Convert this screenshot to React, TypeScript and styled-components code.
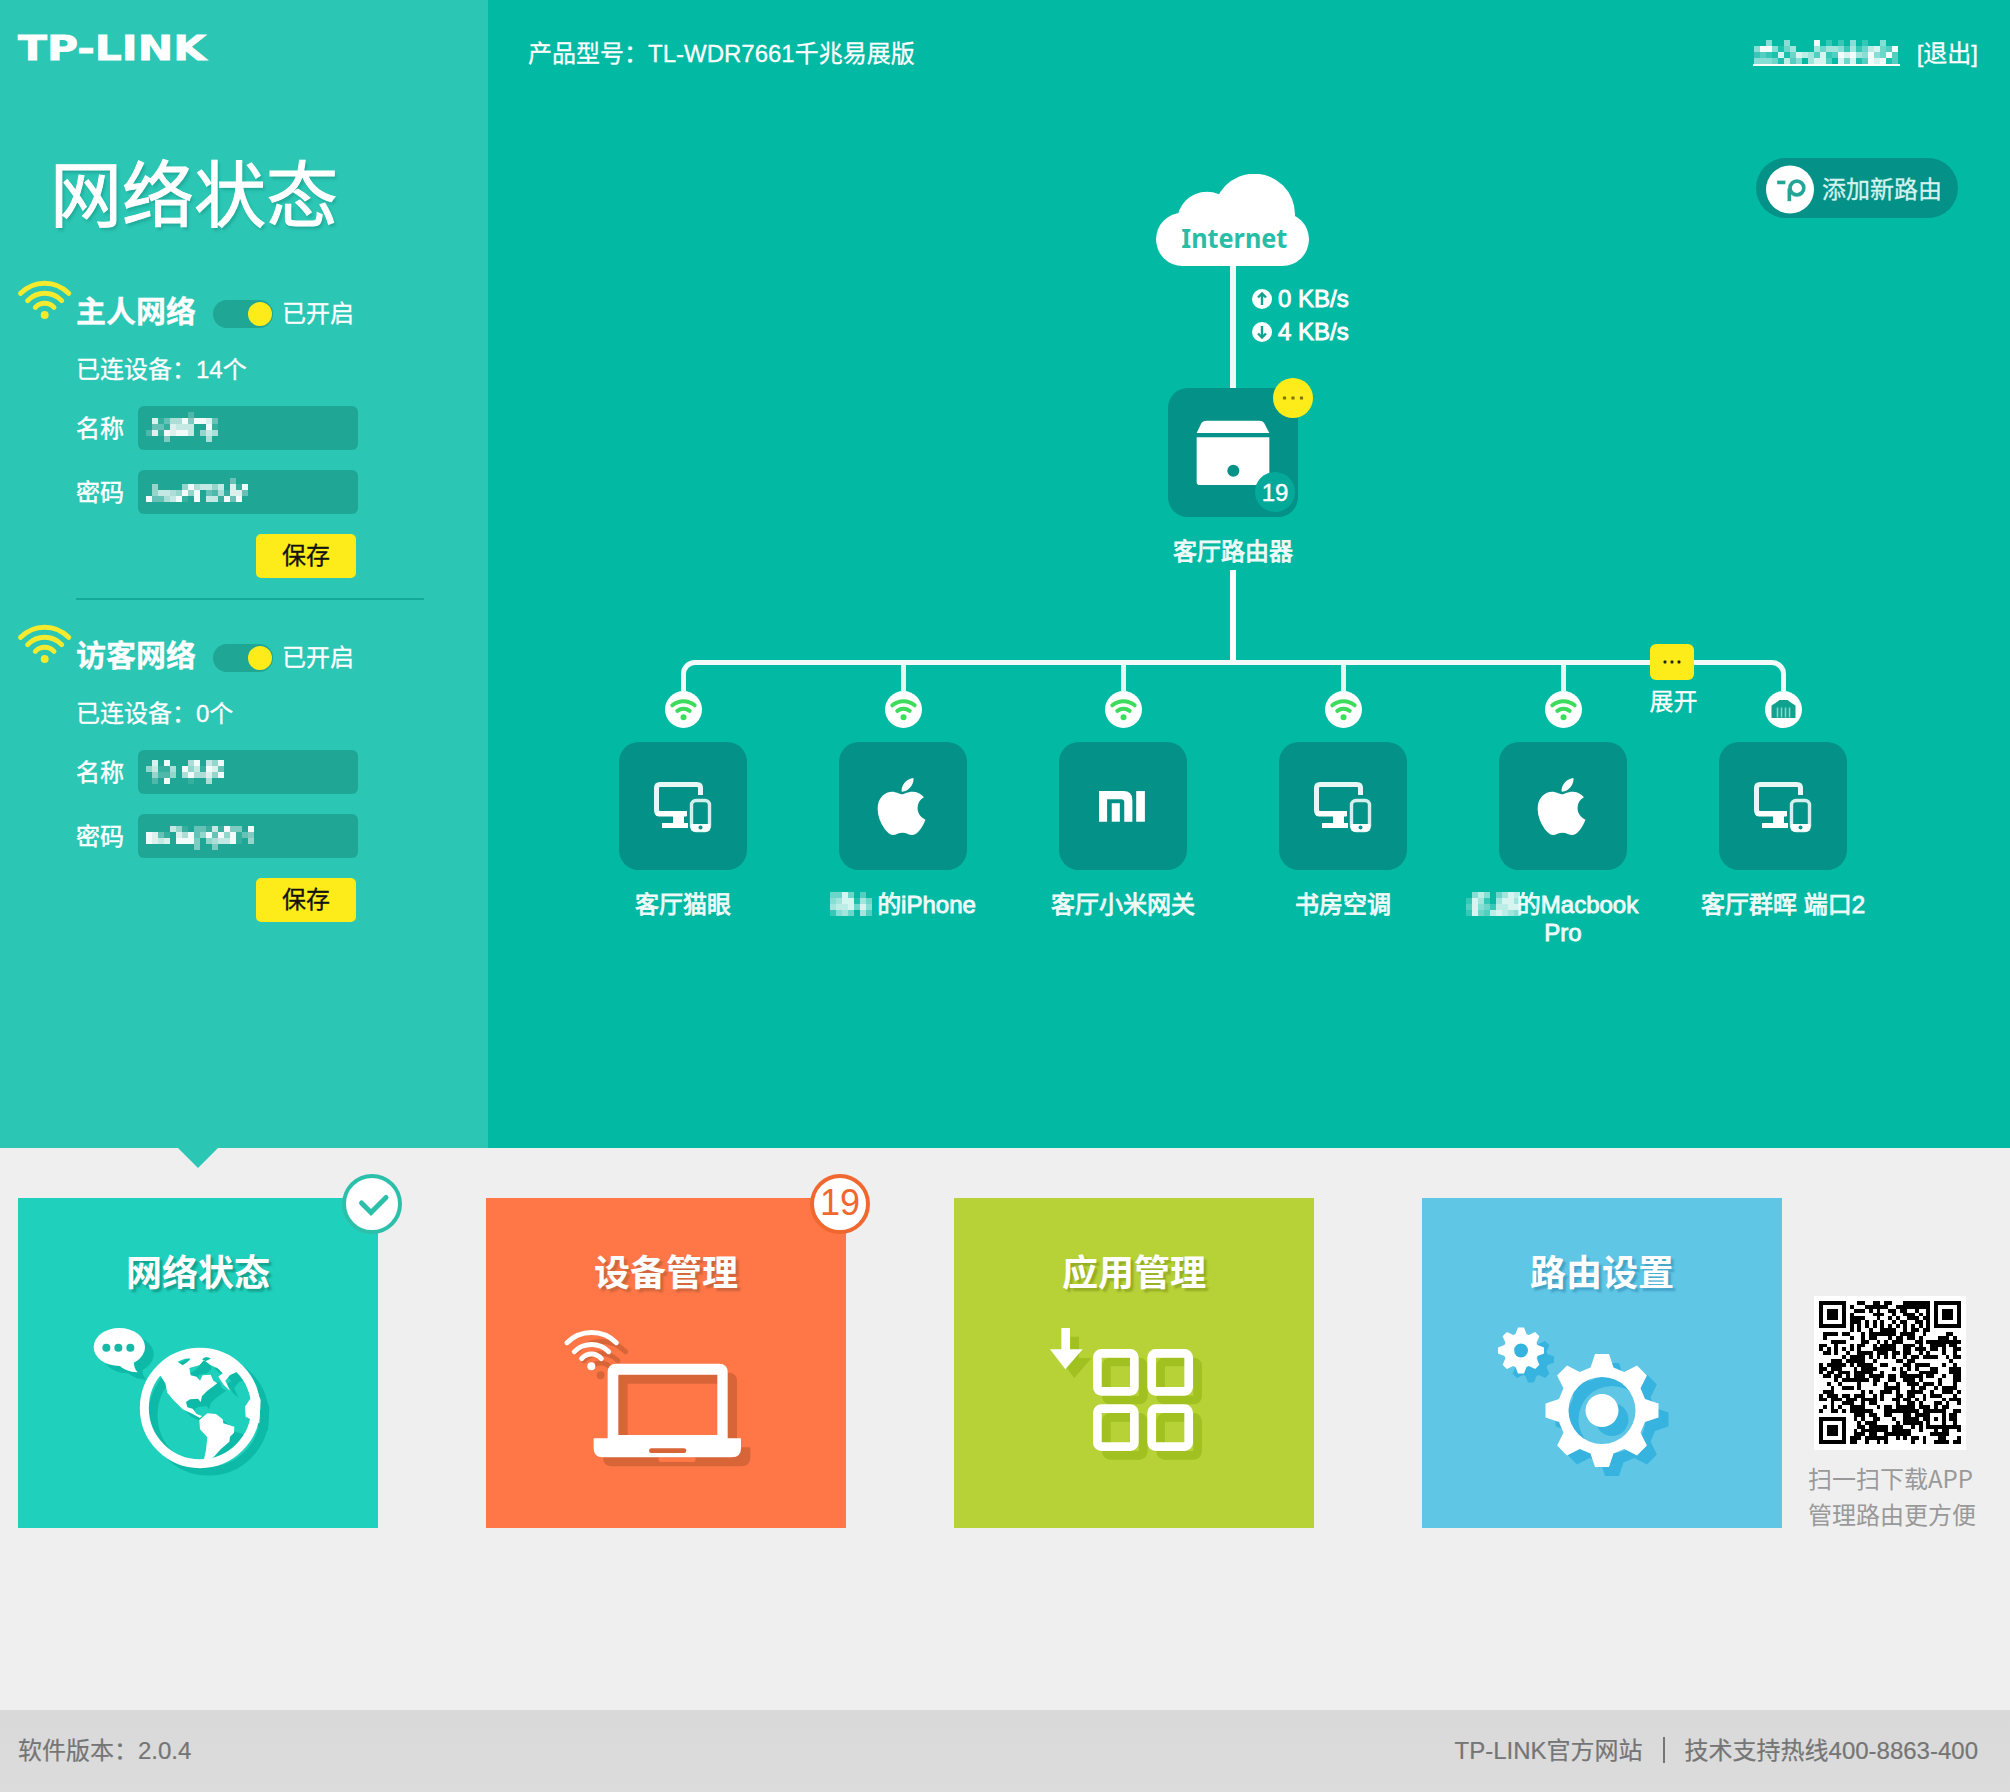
import React from "react";
import styled, { createGlobalStyle } from "styled-components";
import { FaApple } from "react-icons/fa";

const colors = {
  main: "#02b9a4",
  side: "#2bc6b4",
  dark: "#049187",
  field: "#1fa694",
  yellow: "#fdeb1a",
  page: "#efefef",
};

const sans = `"Liberation Sans", "Noto Sans CJK SC", sans-serif`;

const GlobalStyle = createGlobalStyle`
  * { box-sizing: border-box; }
  body { margin: 0; background: ${colors.page}; font-family: ${sans}; font-size: 24px; }
  button, input { font: inherit; }
  svg { display: block; }
`;

const Page = styled.div`
  width: 2010px;
  height: 1792px;
  display: flex;
  flex-direction: column;
  overflow: hidden;
`;

const Top = styled.div`
  display: flex;
  height: 1148px;
  color: #fff;
  -webkit-text-stroke: 0.3px currentColor;
`;

const Sidebar = styled.aside`
  width: 488px;
  background: ${colors.side};
  padding: 30px 0 0 18px;
`;

const Title = styled.h1`
  margin: 80px 0 0 32px;
  font-size: 72px;
  line-height: 100px;
  height: 100px;
  font-weight: 400;
  -webkit-text-stroke: 1px #fff;
  text-shadow: 2px 3px 3px rgba(0, 90, 80, 0.25);
`;

const Network = styled.section<{ $gap: number }>`
  margin-top: ${(p) => p.$gap}px;
  display: flex;
  gap: 4px;
`;

const NetworkBody = styled.div`
  width: 348px;
  padding-top: 12px;
`;

const NetworkHead = styled.div`
  display: flex;
  align-items: center;
  height: 40px;
  line-height: 40px;
`;

const NetworkName = styled.h2`
  margin: 0;
  width: 137px;
  font-size: 30px;
  font-weight: 700;
`;

const Toggle = styled.span`
  display: flex;
  justify-content: flex-end;
  width: 60px;
  height: 28px;
  margin: 4px 9px 0 0;
  padding: 2px 1px;
  border-radius: 14px;
  background: ${colors.field};
  &::after {
    content: "";
    width: 24px;
    height: 24px;
    border-radius: 50%;
    background: ${colors.yellow};
  }
`;

const ToggleText = styled.span`
  padding-top: 4px;
`;

const Connected = styled.div`
  height: 30px;
  line-height: 30px;
  margin: 23px 0 21px;
`;

const Field = styled.div`
  display: flex;
  align-items: center;
  height: 44px;
  margin-bottom: 20px;
`;

const FieldLabel = styled.label`
  width: 62px;
  padding-bottom: 4px;
  -webkit-text-stroke: 0.5px #fff;
`;

const FieldBox = styled.div<{ $top: number }>`
  width: 220px;
  height: 44px;
  border-radius: 6px;
  background: ${colors.field};
  padding: ${(p) => p.$top}px 0 0 8px;
`;

const SaveButton = styled.button`
  display: block;
  width: 100px;
  height: 44px;
  margin-left: 180px;
  padding: 0;
  border: 0;
  border-radius: 5px;
  background: ${colors.yellow};
  color: #111;
  line-height: 44px;
`;

const Divider = styled.div`
  width: 348px;
  height: 2px;
  margin: 20px 0 0 58px;
  background: #14a896;
`;

const Main = styled.main`
  flex: 1;
  background: ${colors.main};
  display: flex;
  flex-direction: column;
`;

const Header = styled.header`
  display: flex;
  align-items: center;
  height: 106px;
  padding: 0 32px 4px 40px;
`;

const Model = styled.div`
  flex: 1;
`;

const User = styled.a`
  width: 147px;
  height: 26px;
  padding-left: 1px;
  margin: 4px 17px 0 0;
  border-bottom: 2px solid #fff;
`;

const Stage = styled.div`
  display: grid;
  flex: 1;
`;

const AddRouter = styled.button`
  grid-area: 1 / 1;
  justify-self: end;
  align-self: start;
  display: flex;
  align-items: center;
  gap: 8px;
  width: 202px;
  height: 60px;
  margin: 52px 52px 0 0;
  padding: 2px 0 0 10px;
  border: 0;
  border-radius: 30px;
  background: ${colors.dark};
  color: #d5f3ee;
  font-family: "Noto Sans CJK SC", sans-serif;
  font-weight: 400;
  line-height: 54px;
  white-space: nowrap;
`;

const AddText = styled.span`
  padding-bottom: 2px;
`;

const Diagram = styled.div`
  grid-area: 1 / 1;
  width: 1320px;
  margin: 68px 0 0 85px;
  display: flex;
  flex-direction: column;
  align-items: center;
`;

const Uplink = styled.div`
  position: relative;
  width: 6px;
  height: 122px;
  background: #eefaf8;
`;

const Speeds = styled.div`
  position: absolute;
  left: 22px;
  top: 16px;
`;

const Speed = styled.div`
  display: flex;
  align-items: center;
  gap: 6px;
  height: 33px;
  white-space: nowrap;
  -webkit-text-stroke: 0.9px #fff;
`;

const Box = styled.div`
  position: relative;
  width: 128px;
  height: 128px;
  border-radius: 20px;
  background: ${colors.dark};
  display: flex;
  align-items: center;
  justify-content: center;
`;

const RouterBox = styled(Box)`
  width: 130px;
  height: 129px;
  margin-bottom: -1px;
`;

const MoreDot = styled.span`
  position: absolute;
  left: 105px;
  top: -10px;
  width: 40px;
  height: 40px;
  border-radius: 50%;
  background: ${colors.yellow};
  display: flex;
  align-items: center;
  justify-content: center;
`;

const CountDot = styled.span`
  position: absolute;
  left: 87px;
  top: 84px;
  width: 40px;
  height: 40px;
  border-radius: 50%;
  background: #05a999;
  line-height: 42px;
  text-align: center;
  -webkit-text-stroke: 0.4px #fff;
`;

const RouterLabel = styled.div`
  height: 54px;
  padding-top: 22px;
  line-height: 28px;
  color: #effaf8;
  -webkit-text-stroke: 0.9px #effaf8;
`;

const Trunk = styled.div`
  width: 6px;
  height: 90px;
  background: #fff;
`;

const Bus = styled.div`
  position: relative;
  display: grid;
  grid-template-columns: repeat(4, 220px) 1fr;
  width: 1105px;
  height: 31px;
  border: 5px solid #f2fbfa;
  border-bottom: 0;
  border-radius: 14px 14px 0 0;
`;

const Stub = styled.span`
  border-right: 5px solid #e6f8f5;
`;

const Expand = styled.div`
  position: absolute;
  left: 964px;
  top: -21px;
  width: 54px;
  line-height: 28px;
`;

const ExpandButton = styled.span`
  display: flex;
  align-items: center;
  justify-content: center;
  width: 44px;
  height: 36px;
  margin-bottom: 8px;
  border-radius: 6px;
  background: ${colors.yellow};
`;

const Nodes = styled.div`
  display: grid;
  grid-template-columns: repeat(6, 220px);
`;

const Node = styled.div`
  display: flex;
  flex-direction: column;
  align-items: center;
`;

const NodeBox = styled(Box)`
  margin: 14px 0 21px;
`;

const BrandSlot = styled.span`
  margin-right: 3px;
`;

const NodeLine = styled.div<{ $shift?: number }>`
  display: flex;
  height: 28px;
  line-height: 28px;
  white-space: nowrap;
  color: #effaf8;
  -webkit-text-stroke: 0.9px #effaf8;
  margin-left: ${(p) => p.$shift || 0}px;
`;

const MosaicSlot = styled.span<{ $gap: number }>`
  padding-top: 1px;
  margin-right: ${(p) => p.$gap}px;
`;

const Bottom = styled.div`
  position: relative;
  height: 562px;
  padding: 50px 0 0 18px;
  display: flex;
  align-items: flex-start;
  &::before {
    content: "";
    position: absolute;
    left: 178px;
    top: 0;
    border: 20px solid transparent;
    border-top-color: ${colors.side};
    border-bottom: 0;
  }
`;

const Tiles = styled.nav`
  display: flex;
  gap: 108px;
`;

const Tile = styled.a<{ $bg: string }>`
  position: relative;
  width: 360px;
  height: 330px;
  background: ${(p) => p.$bg};
  color: #fff;
`;

const TileTitle = styled.div<{ $shadow: string }>`
  height: 120px;
  padding-top: 51px;
  line-height: 50px;
  font-size: 36px;
  font-weight: 700;
  text-align: center;
  text-shadow: 3px 3px 2px ${(p) => p.$shadow};
`;

const TileBadge = styled.span<{ $ring: string }>`
  position: absolute;
  left: 324px;
  top: -24.5px;
  width: 60px;
  height: 60px;
  border-radius: 50%;
  border: 4px solid ${(p) => p.$ring};
  background: #fff;
  color: ${(p) => p.$ring};
  font-size: 36px;
  line-height: 49px;
  text-align: center;
`;

const QrColumn = styled.div`
  margin: 98px 0 0 26px;
  color: #999;
  font-family: "Noto Sans CJK SC", sans-serif;
  line-height: 36px;
`;

const QrBox = styled.div`
  width: 152px;
  height: 154px;
  margin: 0 0 10px 6px;
  padding: 5px;
  background: #fff;
`;

const Footer = styled.footer`
  height: 82px;
  padding: 0 32px 5px 18px;
  background: linear-gradient(#d9d9d9, #dcdcdc);
  color: #757575;
  -webkit-text-stroke: 0.2px #757575;
  display: flex;
  align-items: center;
`;

const Version = styled.span`
  flex: 1;
`;

const Bar = styled.span`
  width: 2px;
  height: 26px;
  margin: 2px 20px 0;
  background: #757575;
`;

const LogoSvg = styled.svg`
  overflow: visible;
`;

/* Pixelated block: every digit is the brightness of one 6px cell. */
function Mosaic({ rows }: { rows: string[] }) {
  const cols = Math.max(...rows.map((r) => r.length));
  return (
    <svg width={cols * 6} height={rows.length * 6} shapeRendering="crispEdges">
      {rows.flatMap((r, y) =>
        r.split("").map((c, x) =>
          c === "0" ? null : (
            <rect key={`${x}-${y}`} x={x * 6} y={y * 6} width={6} height={6} fill="#fff" opacity={Number(c) / 9.5} />
          )
        )
      )}
    </svg>
  );
}

function Dots({ color = "#7d7410", gap = 8.5, r = 1.6 }) {
  return (
    <svg width="30" height="8" viewBox="-15 -4 30 8" fill={color}>
      {[-gap, 0, gap].map((x) => (
        <rect key={x} x={x - r} y={-r} width={r * 2} height={r * 2} rx={0.6} />
      ))}
    </svg>
  );
}

function Logo() {
  return (
    <LogoSvg width="200" height="36" viewBox="0 0 200 36">
      <text x="0" y="30" fontFamily="DejaVu Sans, sans-serif" fontWeight="700" fontSize="33" fill="#fff" stroke="#fff" strokeWidth="0.8" textLength="188" lengthAdjust="spacingAndGlyphs">
        TP-LINK
      </text>
    </LogoSvg>
  );
}

function SideWifi() {
  return (
    <svg width="54" height="40" viewBox="54 840 162 120" fill="none" stroke="#f4ea2e" strokeWidth="15" strokeLinecap="round">
      <path d="M62 880A100 100 0 0 1 206 880" />
      <path d="M83 902A69 69 0 0 1 185 902" />
      <path d="M106 922A38 38 0 0 1 162 922" />
      <circle cx="134" cy="945" r="12" fill="#f4ea2e" stroke="none" />
    </svg>
  );
}

function CloudIcon() {
  return (
    <svg width="155" height="92" viewBox="108 72 465 276" fill="#fff">
      <circle cx="188" cy="268" r="80" />
      <circle cx="261" cy="215" r="90" />
      <circle cx="403" cy="193" r="122" />
      <circle cx="487" cy="268" r="80" />
      <rect x="188" y="200" width="300" height="148" />
      <text x="184" y="294" fontFamily="Noto Sans, sans-serif" fontWeight="700" fontSize="82" fill="#27bda6" textLength="318" lengthAdjust="spacingAndGlyphs">
        Internet
      </text>
    </svg>
  );
}

function SpeedIcon({ down }: { down?: boolean }) {
  return (
    <svg width="20" height="20" viewBox="-10 -10 20 20">
      <circle r="10" fill="#fff" />
      <path d="M0 6V-5M-4 -1.5L0 -5.5L4 -1.5" transform={down ? "scale(1 -1)" : undefined} fill="none" stroke="#14a08f" strokeWidth="2.4" />
    </svg>
  );
}

function RouterIcon() {
  return (
    <svg width="74" height="65" viewBox="230 808 222 195" fill="#fff">
      <path d="M262 810H420Q430 810 434 816L450 847H232L246 818Q250 810 262 810Z" />
      <path d="M232 860H450V993Q450 1003 440 1003H242Q232 1003 232 993Z" />
      <circle cx="342" cy="960" r="18" fill={colors.dark} />
    </svg>
  );
}

function PIcon() {
  return (
    <svg width="48" height="49" viewBox="197 432 146 147">
      <circle cx="270" cy="505.5" r="73" fill="#fff" />
      <g fill="none" stroke="#24a596" strokeWidth="11">
        <path d="M231 484H256" />
        <path d="M268 541V502" />
        <circle cx="291" cy="501" r="21" />
      </g>
    </svg>
  );
}

function PortIcon({ wired }: { wired?: boolean }) {
  return (
    <svg width="37" height="37" viewBox="-18.5 -18.5 37 37">
      <circle r="18.5" fill="#fff" />
      {wired ? (
        <g>
          <path d="M-12 8.5V-4L-8 -6.500L-4 -9.500H4L8 -6.500L12 -4V8.500Z" fill="#12a08f" />
          <path d="M-6 8V-2M-2 8V-2M2 8V-2M6 8V-2" stroke="#8fd6cd" strokeWidth="1.5" />
        </g>
      ) : (
        <g fill="none" stroke="#3ddc5c" strokeWidth="4" strokeLinecap="round">
          <path d="M-11.2 -4.2A17.5 17.5 0 0 1 11.2 -4.2" />
          <path d="M-6.2 1.4A10.5 10.5 0 0 1 6.2 1.4" />
          <circle cy="7.800" r="3" fill="#3ddc5c" stroke="none" />
        </g>
      )}
    </svg>
  );
}

function DevicesIcon() {
  return (
    <svg width="128" height="128" viewBox="0 0 128 128" fill="none">
      <path d="M81.5 53V46Q81.5 42.5 78 42.5H41Q37.5 42.5 37.5 46V68Q37.5 71.5 41 71.5H68" stroke="#e6f7f5" strokeWidth="5" />
      <path d="M40 69H67.5V74.5H65V81H69V86H43V81H54V74.5H40Q37 74.5 36 72Z" fill="#fff" />
      <rect x="72.5" y="58.5" width="18" height="30" rx="4.5" stroke="#d3efec" strokeWidth="3.4" />
      <path d="M72 82H91V86Q91 89.5 87.5 89.5H75.5Q72 89.5 72 86Z" fill="#fff" />
      <circle cx="81.5" cy="85.5" r="2" fill={colors.dark} />
    </svg>
  );
}

function MiIcon() {
  return (
    <svg width="46" height="31" viewBox="0 0 45.5 30.5" fill="#fff">
      <path d="M0 0H24Q33 0 33 9V30.3H25V11Q25 8 22 8H8V30.3H0Z" />
      <rect x="12.6" y="12" width="8" height="18.3" />
      <rect x="36.8" y="0" width="8.6" height="30.3" />
    </svg>
  );
}

function Shadowed({ color, dx, dy, children }: { color: string; dx: number; dy: number; children: React.ReactNode }) {
  return (
    <>
      <g transform={`translate(${dx} ${dy})`} fill={color} stroke={color}>
        {children}
      </g>
      <g fill="#fff" stroke="#fff">
        {children}
      </g>
    </>
  );
}

function GlobeIcon() {
  return (
    <svg width="360" height="210" viewBox="54 534 1080 630">
      <Shadowed color="#0dbaa7" dx={26} dy={22}>
        <g stroke="none">
          <ellipse cx="358" cy="621" rx="77" ry="57" />
          <path d="M352 672Q380 698 413 697Q400 684 402 664Z" />
        </g>
        <circle cx="600" cy="804" r="167" fill="none" strokeWidth="27" />
        <path
          stroke="none"
          fillRule="evenodd"
          d="M460 712Q500 640 600 636Q690 636 735 705L712 695L690 705L676 722L690 752L672 736L655 710L668 700L652 684L632 676L612 660L598 676L568 684L572 706L590 710L600 722L608 706L632 704L640 722L652 730L636 742L622 752L606 768L602 786L594 776L570 778L558 786L562 802L578 806L590 822L606 828L600 834L578 822L548 808L520 780L502 758L496 730L482 708ZM530 664Q545 652 572 656Q562 668 548 676ZM606 658L622 648L632 656L616 664Z"
        />
        <path stroke="none" d="M598 840L622 820L648 822L668 838L670 850L703 860L702 878L690 890L688 905L662 928L644 948L628 960L628 976L608 976L618 930L622 892L600 868Z" />
        <path stroke="none" d="M738 735L755 775L748 780L735 800L737 830L752 838L778 850L782 780L762 730Z" />
      </Shadowed>
      <g fill="#17b8a6">
        <circle cx="319" cy="623" r="12" />
        <circle cx="355" cy="623" r="12" />
        <circle cx="391" cy="623" r="12" />
      </g>
    </svg>
  );
}

function LaptopIcon() {
  return (
    <svg width="360" height="210" viewBox="48 534 1080 630">
      <Shadowed color="#d76538" dx={28} dy={27}>
        <g fill="none" strokeWidth="15" strokeLinecap="round">
          <path d="M291 608A105 105 0 0 1 439 608" />
          <path d="M313 635A73 73 0 0 1 416 635" />
          <path d="M335 656A38 38 0 0 1 394 656" />
        </g>
        <circle cx="364" cy="679" r="12" stroke="none" />
        <path stroke="none" fillRule="evenodd" d="M413 897V697Q413 671 439 671H747Q773 671 773 697V897ZM445 704V885H742V704Z" />
        <path stroke="none" fillRule="evenodd" d="M371 895H813V925Q813 952 786 952H398Q371 952 371 925ZM544 925Q537 925 537 932Q537 939 544 939H642Q649 939 649 932Q649 925 642 925Z" />
      </Shadowed>
    </svg>
  );
}

function AppsIcon() {
  return (
    <svg width="360" height="210" viewBox="42 534 1080 630">
      <Shadowed color="#a0c120" dx={27} dy={26}>
        <path stroke="none" d="M364 564H390V628H428L376 688L330 628H364Z" />
        <g fill="none" strokeWidth="26">
          {[472, 635].map((x) =>
            [640, 806].map((y) => <rect key={`${x}${y}`} x={x} y={y} width="111" height="114" rx="12" />)
          )}
        </g>
      </Shadowed>
    </svg>
  );
}

function gearPath(cx: number, cy: number, outer: number, root: number, top: number, base: number) {
  const pts: string[] = [];
  for (let i = 0; i < 8; i++) {
    const a = (i * Math.PI) / 4;
    for (const [r, half] of [[root, -base], [outer, -top], [outer, top], [root, base]]) {
      const x = cx + r * Math.sin(a) + half * Math.cos(a);
      const y = cy - r * Math.cos(a) + half * Math.sin(a);
      pts.push(`${x.toFixed(2)} ${y.toFixed(2)}`);
    }
  }
  return `M${pts.join("L")}Z`;
}

const ring = (cx: number, cy: number, r: number) => `M${cx - r} ${cy}a${r} ${r} 0 1 0 ${2 * r} 0a${r} ${r} 0 1 0 ${-2 * r} 0Z`;

function GearsIcon() {
  return (
    <svg width="360" height="210" viewBox="0 0 360 210">
      <Shadowed color="#37b3df" dx={10} dy={9}>
        <path stroke="none" fillRule="evenodd" d={gearPath(99, 32.5, 23, 16.5, 3, 5.5) + ring(99, 32.5, 7)} />
        <path stroke="none" fillRule="evenodd" d={gearPath(180, 92.5, 56.5, 43, 7, 11.5) + ring(180, 92.5, 33.5)} />
        <circle cx="180" cy="92.5" r="16.5" stroke="none" />
      </Shadowed>
    </svg>
  );
}

const QR_SIZE = 37;

function qrModules() {
  let seed = 7661;
  const rnd = () => {
    seed = (seed * 1103515245 + 12345) % 2147483648;
    return seed / 2147483648;
  };
  const square = (x: number, y: number, cx: number, cy: number) => Math.max(Math.abs(x - cx), Math.abs(y - cy));
  let d = "";
  for (let y = 0; y < QR_SIZE; y++) {
    for (let x = 0; x < QR_SIZE; x++) {
      let on = rnd() > 0.45;
      for (const [cx, cy] of [[3, 3], [33, 3], [3, 33]]) {
        const dist = square(x, y, cx, cy);
        if (dist <= 4) on = dist === 3 || dist <= 1;
      }
      const align = square(x, y, 30, 30);
      if (align <= 2) on = align !== 1;
      if (y === 6 && x > 7 && x < 29) on = x % 2 === 0;
      if (x === 6 && y > 7 && y < 29) on = y % 2 === 0;
      if (on) d += `M${x} ${y}h1v1h-1Z`;
    }
  }
  return d;
}

function QrCode() {
  return (
    <svg width="142" height="143" viewBox="0 0 37 37" preserveAspectRatio="none" shapeRendering="crispEdges">
      <path d={qrModules()} />
    </svg>
  );
}

const networks = [
  {
    name: "主人网络",
    count: 14,
    gap: 34,
    ssid: { top: 6, rows: ["000000020000", "081366949983", "033187770091", "281989970576", "000400000060"] },
    key: { top: 8, rows: ["00000000000000300", "05000059677570819", "05776595903261883", "93367910907719390"] },
  },
  {
    name: "访客网络",
    count: 0,
    gap: 24,
    ssid: { top: 10, rows: ["0809000690759", "5711609571983", "0522506966859", "0209000100600"] },
    key: { top: 12, rows: ["000075103317194409", "983108693593959134", "987809994056779105", "000000004004000000"] },
  },
];

const devices = [
  { icon: "pc", label: "客厅猫眼" },
  { icon: "apple", label: "的iPhone", mosaic: ["4484030", "5688164", "6778485", "2564063"], gap: 5 },
  { icon: "mi", label: "客厅小米网关" },
  { icon: "pc", label: "书房空调" },
  { icon: "apple", label: "的Macbook", second: "Pro", mosaic: ["057504687", "286206886", "385427788", "284378765"], gap: -3, shift: -22 },
  { icon: "pc", label: "客厅群晖 端口2", wired: true },
];

const tiles = [
  { title: "网络状态", bg: "#1fd0bc", shadow: "rgba(20,160,140,.9)", icon: <GlobeIcon /> },
  { title: "设备管理", bg: "#ff7647", shadow: "rgba(200,100,60,.9)", icon: <LaptopIcon /> },
  { title: "应用管理", bg: "#b7d237", shadow: "rgba(145,170,35,.9)", icon: <AppsIcon /> },
  { title: "路由设置", bg: "#5fc6e6", shadow: "rgba(65,160,195,.9)", icon: <GearsIcon /> },
];

export default function App() {
  return (
    <Page>
      <GlobalStyle />
      <Top>
        <Sidebar>
          <Logo />
          <Title>网络状态</Title>
          {networks.map((n, i) => (
            <React.Fragment key={n.name}>
              <Network $gap={n.gap}>
                <SideWifi />
                <NetworkBody>
                  <NetworkHead>
                    <NetworkName>{n.name}</NetworkName>
                    <Toggle />
                    <ToggleText>已开启</ToggleText>
                  </NetworkHead>
                  <Connected>已连设备：{n.count}个</Connected>
                  <Field>
                    <FieldLabel>名称</FieldLabel>
                    <FieldBox $top={n.ssid.top}>
                      <Mosaic rows={n.ssid.rows} />
                    </FieldBox>
                  </Field>
                  <Field>
                    <FieldLabel>密码</FieldLabel>
                    <FieldBox $top={n.key.top}>
                      <Mosaic rows={n.key.rows} />
                    </FieldBox>
                  </Field>
                  <SaveButton>保存</SaveButton>
                </NetworkBody>
              </Network>
              {i === 0 && <Divider />}
            </React.Fragment>
          ))}
        </Sidebar>
        <Main>
          <Header>
            <Model>产品型号：TL-WDR7661千兆易展版</Model>
            <User>
              <Mosaic rows={["005005000090202050200500", "599514600064665262478439", "232181487638239896595493", "555417350688308481398913"]} />
            </User>
            <span>[退出]</span>
          </Header>
          <Stage>
            <Diagram>
              <CloudIcon />
              <Uplink>
                <Speeds>
                  <Speed>
                    <SpeedIcon />0 KB/s
                  </Speed>
                  <Speed>
                    <SpeedIcon down />4 KB/s
                  </Speed>
                </Speeds>
              </Uplink>
              <RouterBox>
                <RouterIcon />
                <MoreDot>
                  <Dots />
                </MoreDot>
                <CountDot>19</CountDot>
              </RouterBox>
              <RouterLabel>客厅路由器</RouterLabel>
              <Trunk />
              <Bus>
                <Stub />
                <Stub />
                <Stub />
                <Stub />
                <Expand>
                  <ExpandButton>
                    <Dots color="#222" gap={7} r={1.4} />
                  </ExpandButton>
                  展开
                </Expand>
              </Bus>
              <Nodes>
                {devices.map((d) => (
                  <Node key={d.label}>
                    <PortIcon wired={d.wired} />
                    <NodeBox>
                      {d.icon === "pc" && <DevicesIcon />}
                      {d.icon === "apple" && (
                        <BrandSlot>
                          <FaApple size={65} />
                        </BrandSlot>
                      )}
                      {d.icon === "mi" && (
                        <BrandSlot>
                          <MiIcon />
                        </BrandSlot>
                      )}
                    </NodeBox>
                    <NodeLine $shift={d.shift}>
                      {d.mosaic && (
                        <MosaicSlot $gap={d.gap || 0}>
                          <Mosaic rows={d.mosaic} />
                        </MosaicSlot>
                      )}
                      {d.label}
                    </NodeLine>
                    {d.second && <NodeLine>{d.second}</NodeLine>}
                  </Node>
                ))}
              </Nodes>
            </Diagram>
            <AddRouter>
              <PIcon />
              <AddText>添加新路由</AddText>
            </AddRouter>
          </Stage>
        </Main>
      </Top>
      <Bottom>
        <Tiles>
          {tiles.map((t, i) => (
            <Tile key={t.title} $bg={t.bg}>
              <TileTitle $shadow={t.shadow}>{t.title}</TileTitle>
              {t.icon}
              {i === 0 && (
                <TileBadge $ring="#2cc0aa">
                  <svg width="52" height="52" viewBox="0 0 52 52" fill="none" stroke="#2cc0aa" strokeWidth="5" strokeLinecap="round">
                    <path d="M15.5 25L25 34.5L40 19.5" />
                  </svg>
                </TileBadge>
              )}
              {i === 1 && <TileBadge $ring="#f0682f">19</TileBadge>}
            </Tile>
          ))}
        </Tiles>
        <QrColumn>
          <QrBox>
            <QrCode />
          </QrBox>
          <div>扫一扫下载APP</div>
          <div>管理路由更方便</div>
        </QrColumn>
      </Bottom>
      <Footer>
        <Version>软件版本：2.0.4</Version>
        <span>TP-LINK官方网站</span>
        <Bar />
        <span>技术支持热线400-8863-400</span>
      </Footer>
    </Page>
  );
}
